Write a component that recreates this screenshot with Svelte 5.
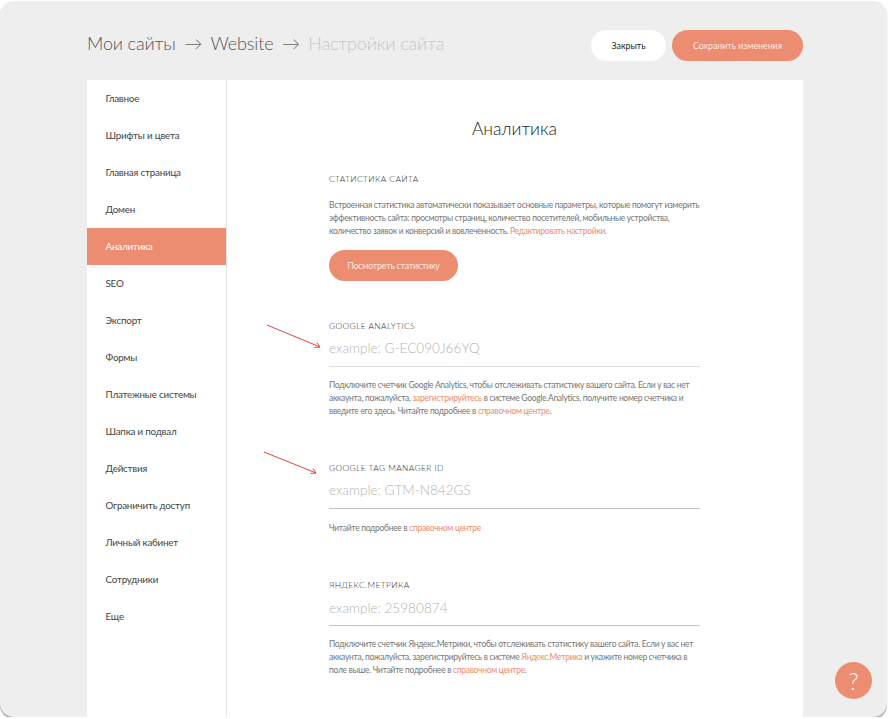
<script>
	const nav = [
		'Главное',
		'Шрифты и цвета',
		'Главная страница',
		'Домен',
		'Аналитика',
		'SEO',
		'Экспорт',
		'Формы',
		'Платежные системы',
		'Шапка и подвал',
		'Действия',
		'Ограничить доступ',
		'Личный кабинет',
		'Сотрудники',
		'Еще'
	];
	const active = 'Аналитика';
</script>

<div class="shell">
	<header class="top">
		<div class="crumbs">
			<span>Мои сайты</span>
			<span class="sep">→</span>
			<span>Website</span>
			<span class="sep">→</span>
			<span class="current">Настройки сайта</span>
		</div>
		<div class="actions">
			<button class="btn white">Закрыть</button>
			<button class="btn accent save">Сохранить изменения</button>
		</div>
	</header>

	<div class="panel">
		<nav class="side">
			{#each nav as item}
				<a href="#top" class="item" class:active={item === active}>{item}</a>
			{/each}
		</nav>

		<main class="main">
			<h1>Аналитика</h1>

			<section class="first">
				<h2>Статистика сайта</h2>
				<p>
					Встроенная статистика автоматически показывает основные параметры, которые помогут измерить<br />
					эффективность сайта: просмотры страниц, количество посетителей, мобильные устройства,<br />
					количество заявок и конверсий и вовлеченность. <a href="#top">Редактировать настройки.</a>
				</p>
				<button class="btn accent stats">Посмотреть статистику</button>
			</section>

			<section class="ga">
				<h2>Google Analytics</h2>
				<input class="faint" placeholder="example: G-EC090J66YQ" />
				<p>
					Подключите счетчик Google Analytics, чтобы отслеживать статистику вашего сайта. Если у вас нет<br />
					аккаунта, пожалуйста, <a href="#top">зарегистрируйтесь</a> в системе Google.Analytics, получите номер счетчика и<br />
					введите его здесь. Читайте подробнее в <a href="#top">справочном центре</a>.
				</p>
			</section>

			<section class="gtm">
				<h2>Google Tag Manager ID</h2>
				<input placeholder="example: GTM-N842GS" />
				<p>Читайте подробнее в <a href="#top">справочном центре</a></p>
			</section>

			<section class="ym">
				<h2>Яндекс.Метрика</h2>
				<input placeholder="example: 25980874" />
				<p>
					Подключите счетчик Яндекс.Метрики, чтобы отслеживать статистику вашего сайта. Если у вас нет<br />
					аккаунта, пожалуйста, зарегистрируйтесь в системе <a href="#top">Яндекс.Метрика</a> и укажите номер счетчика в<br />
					поле выше. Читайте подробнее в <a href="#top">справочном центре</a>.
				</p>
			</section>
		</main>
	</div>

	<svg class="arrows" width="889" height="719" viewBox="0 0 889 719" fill="none" stroke="#f0403a" stroke-width="1">
		<path d="M267 325 L320 347 M314.5 347.5 L320 347 L317 342.5" />
		<path d="M264 452 L316 473 M310.5 473.5 L316 473 L313 468.5" />
	</svg>

	<button class="help" aria-label="Помощь">?</button>
</div>

<style>
	:global(body) {
		background: #fff;
		font-family: Lato, "Open Sans", sans-serif;
	}
	.shell {
		position: relative;
		box-sizing: border-box;
		width: 887px;
		height: 716px;
		margin-top: 1px;
		overflow: hidden;
		background: #eeeeee;
		border-radius: 14px;
		box-shadow: 0 2px 1px #a9a9a9;
	}
	.top {
		display: flex;
		align-items: center;
		justify-content: space-between;
		box-sizing: border-box;
		height: 79px;
		padding: 10px 84px 0 87px;
	}
	.crumbs {
		display: flex;
		gap: 8.5px;
		padding-bottom: 6px;
		font-size: 18px;
		font-weight: 300;
		letter-spacing: -0.15px;
		color: #555;
	}
	.sep {
		color: #666;
	}
	.current {
		color: #c6c6c6;
	}
	.actions {
		display: flex;
		gap: 6px;
	}
	.btn {
		height: 31px;
		border: 0;
		border-radius: 16px;
		padding: 0;
		font-family: inherit;
		font-size: 8.8px;
	}
	.white {
		width: 75px;
		background: #fff;
		color: #222;
	}
	.accent {
		background: #ec8c70;
		color: #fde9e2;
	}
	.save {
		width: 131px;
	}
	.panel {
		display: flex;
		height: 637px;
		margin: 0 84px 0 87px;
		background: #fff;
	}
	.side {
		flex: none;
		width: 139px;
		border-right: 1px solid #e4e4e4;
	}
	.item {
		display: flex;
		align-items: center;
		box-sizing: border-box;
		height: 37px;
		padding: 0 0 2px 18.5px;
		font-size: 9.8px;
		letter-spacing: -0.2px;
		color: #444;
		text-decoration: none;
	}
	.item.active {
		background: #ec8c70;
		color: #fff;
	}
	.main {
		flex: 1;
		min-width: 0;
		padding: 0 103px 0 102px;
	}
	h1 {
		margin: 37px 0 0;
		font-size: 17.5px;
		line-height: 24px;
		font-weight: 300;
		text-align: center;
		color: #222;
	}
	h2 {
		margin: 0;
		font-size: 8.4px;
		line-height: 12px;
		font-weight: 300;
		letter-spacing: 0.4px;
		text-transform: uppercase;
		color: #333;
	}
	p {
		margin: 0;
		font-size: 8.5px;
		line-height: 13px;
		font-weight: 400;
		letter-spacing: -0.3px;
		color: #777;
		white-space: nowrap;
	}
	p a {
		color: #ec8c70;
		text-decoration: none;
	}
	section.first {
		margin-top: 32px;
	}
	section.first p {
		margin-top: 14px;
	}
	.stats {
		display: block;
		width: 129px;
		margin-top: 12px;
		letter-spacing: -0.2px;
	}
	section.ga {
		margin-top: 39px;
	}
	section.gtm {
		margin-top: 44px;
	}
	section.ym {
		margin-top: 44px;
	}
	input {
		display: block;
		box-sizing: border-box;
		width: 371px;
		height: 31px;
		margin-top: 4px;
		padding: 0 0 6px;
		border: 0;
		border-bottom: 1px solid #c4c4c4;
		outline: none;
		background: transparent;
		font-family: inherit;
		font-size: 13.6px;
		font-weight: 300;
	}
	input.faint {
		border-bottom: 1px solid #dcdcdc;
	}
	.ym input {
		height: 30px;
		margin-top: 5px;
		padding-bottom: 6px;
	}
	input::placeholder {
		color: #b4b4b4;
	}
	section p {
		margin-top: 12px;
	}
	.gtm p {
		margin-top: 13px;
	}
	.arrows {
		position: absolute;
		left: 0;
		top: -1px;
		pointer-events: none;
	}
	.help {
		position: absolute;
		left: 835px;
		top: 661px;
		width: 37px;
		height: 37px;
		border: 0;
		border-radius: 50%;
		padding: 0;
		background: #ec8c70;
		color: #fff;
		font-family: inherit;
		font-size: 24px;
		font-weight: 300;
	}
</style>
